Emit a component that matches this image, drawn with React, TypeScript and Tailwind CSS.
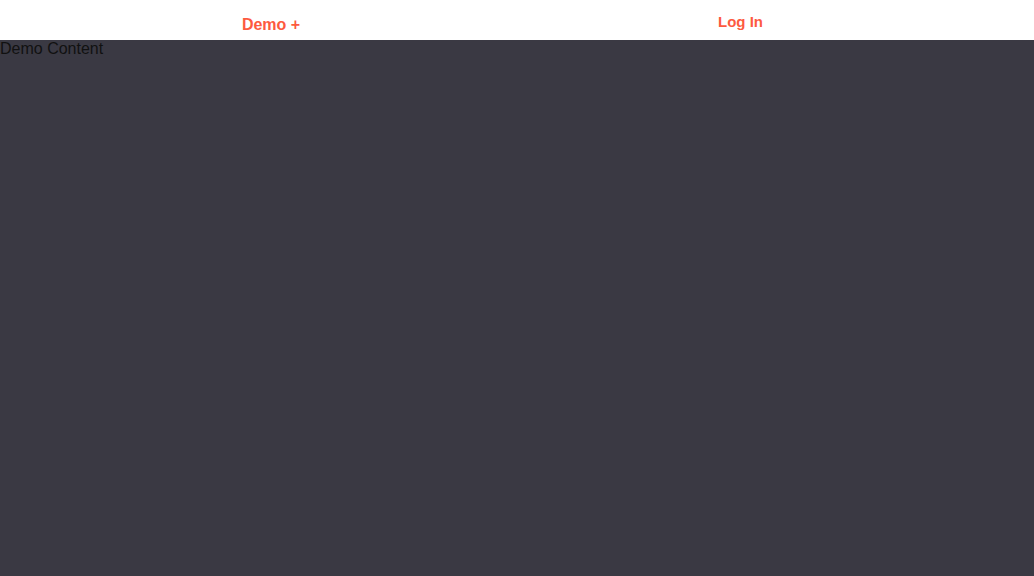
export default function App() {
  return (
    <div className="flex h-[576px] w-[1034px] flex-col bg-[#3a3943] font-['Liberation_Sans',Arial,sans-serif]">
      <header className="flex h-10 shrink-0 bg-white">
        <div className="flex w-[542px] items-center justify-center pt-[9px]">
          <span className="text-[16px] font-bold text-[#fd5a3f]">Demo +</span>
        </div>
        <div className="flex w-[397px] items-center justify-center pt-[5px]">
          <span className="text-[15px] font-bold text-[#fd5a3f]">Log In</span>
        </div>
      </header>
      <main className="flex-1">
        <p className="text-[16px] leading-[18px] text-[#111]">Demo Content</p>
      </main>
    </div>
  );
}
